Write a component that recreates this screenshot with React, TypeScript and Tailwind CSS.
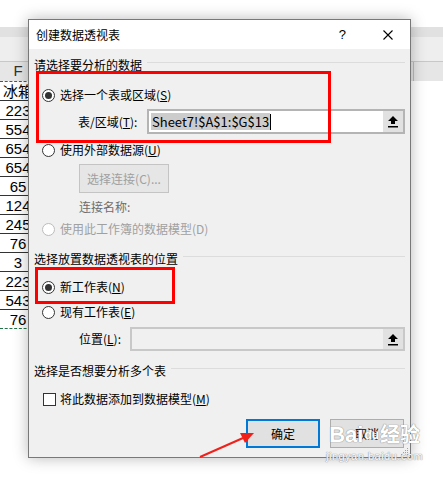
import * as React from "react";

const cells = ["冰箱", "223", "554", "654", "654", "65", "124", "245", "76", "3", "223", "543", "76"];

const Radio = ({ checked = false, disabled = false }: { checked?: boolean; disabled?: boolean }) => (
  <span
    className={`flex h-[13px] w-[13px] shrink-0 items-center justify-center rounded-full border bg-white ${
      disabled ? "border-[#bcbcbc]" : "border-[#333]"
    }`}
  >
    {checked && <span className="h-[7px] w-[7px] rounded-full bg-[#333]" />}
  </span>
);

const UpArrow = () => (
  <svg width="12" height="13" viewBox="0 0 12 13">
    <polygon points="6,1 11,6 8,6 8,9 4,9 4,6 1,6" fill="#000" />
    <rect x="1" y="11" width="10" height="1.5" fill="#000" />
  </svg>
);

const GroupLabel = ({ text }: { text: string }) => (
  <div className="flex h-[18px] items-center gap-[5px]">
    <span>{text}</span>
    <span className="mb-[5px] h-px flex-1 bg-[#dcdcdc]" />
  </div>
);

const App = () => {
  return (
    <div className="relative h-[479px] w-[443px] overflow-hidden bg-white font-['Noto_Sans_CJK_SC',sans-serif]">
      {/* spreadsheet behind the dialog */}
      <div className="h-[27px]" />
      <div className="h-[10px] bg-[#e1e1e1]" />
      <div className="h-[25px] border-b border-[#c8c8c8] bg-[#eeeeee]" />
      <div className="flex h-[19px] bg-[#e6e6e6]">
        <div className="flex w-[36px] items-center justify-center text-[15px] text-[#333] font-['Liberation_Sans',sans-serif]">
          F
        </div>
        <div className="ml-auto w-[30px] border-l border-[#bdbdbd]" />
      </div>
      <div className="w-[36px] border-t border-dashed border-[#217346]">
        {cells.map((c, i) => (
          <div
            key={i}
            className={`flex h-[19px] items-center justify-center text-[15px] leading-none text-black font-['Liberation_Sans','Noto_Sans_CJK_SC',sans-serif] ${
              i === cells.length - 1 ? "border-b border-dashed border-[#217346]" : "border-b border-[#333]"
            }`}
          >
            {c}
          </div>
        ))}
      </div>

      {/* dialog */}
      <div className="absolute left-[28px] top-[19px] flex h-[439px] w-[383px] flex-col border border-[#787878] bg-[#f0f0f0] text-[12px] text-black shadow-[0_0_14px_rgba(0,0,0,0.28)]">
        <div className="flex h-[29px] items-center bg-white pl-[7px] pr-[17px]">
          <span>创建数据透视表</span>
          <span className="ml-auto text-[13px] font-['Liberation_Sans',sans-serif]">?</span>
          <svg className="ml-[37px]" width="10" height="10" viewBox="0 0 10 10">
            <path d="M0.5 0.5 L9.5 9.5 M9.5 0.5 L0.5 9.5" stroke="#000" strokeWidth="1.1" />
          </svg>
        </div>

        <div className="flex flex-1 flex-col px-[5px] pt-[7px]">
          <GroupLabel text="请选择要分析的数据" />

          <div className="mt-[12px] flex h-[18px] items-center gap-[5px] pl-[8px]">
            <Radio checked />
            <span>
              选择一个表或区域(<span className="underline">S</span>)
            </span>
          </div>

          <div className="mt-[5px] flex h-[25px] items-center pl-[44px]">
            <span className="w-[69px]">
              表/区域(<span className="underline">T</span>):
            </span>
            <div className="flex h-[25px] flex-1 items-stretch border-2 border-[#b4b4b4] bg-white">
              <div className="flex flex-1 items-center pl-[2px]">
                <span className="bg-[#cccccc] px-px text-[13px] leading-[17px]">Sheet7!$A$1:$G$13</span>
                <span className="h-[16px] w-px bg-black" />
              </div>
              <div className="flex w-[20px] items-center justify-center bg-[#e1e1e1]">
                <UpArrow />
              </div>
            </div>
          </div>

          <div className="mt-[7px] flex h-[18px] items-center gap-[5px] pl-[8px]">
            <Radio />
            <span>
              使用外部数据源(<span className="underline">U</span>)
            </span>
          </div>

          <div className="mt-[5px] pl-[45px]">
            <div className="flex h-[29px] w-[90px] items-center justify-center border border-[#c4c4c4] bg-[#e6e6e6] text-[#a0a0a0]">
              选择连接(C)...
            </div>
          </div>

          <div className="mt-[5px] flex h-[18px] items-center pl-[45px] text-[#6d6d6d]">连接名称:</div>

          <div className="mt-[4px] flex h-[18px] items-center gap-[5px] pl-[8px] text-[#a0a0a0]">
            <Radio disabled />
            <span>使用此工作簿的数据模型(D)</span>
          </div>

          <div className="mt-[12px]">
            <GroupLabel text="选择放置数据透视表的位置" />
          </div>

          <div className="mt-[10px] flex h-[18px] items-center gap-[5px] pl-[8px]">
            <Radio checked />
            <span>
              新工作表(<span className="underline">N</span>)
            </span>
          </div>

          <div className="mt-[7px] flex h-[18px] items-center gap-[5px] pl-[8px]">
            <Radio />
            <span>
              现有工作表(<span className="underline">E</span>)
            </span>
          </div>

          <div className="mt-[6px] flex h-[24px] items-center pl-[45px]">
            <span className="w-[51px]">
              位置(<span className="underline">L</span>):
            </span>
            <div className="flex h-[24px] flex-1 items-stretch border-2 border-[#c8c8c8] bg-[#f0f0f0]">
              <div className="flex-1" />
              <div className="flex w-[20px] items-center justify-center bg-[#e1e1e1]">
                <UpArrow />
              </div>
            </div>
          </div>

          <div className="mt-[11px]">
            <GroupLabel text="选择是否想要分析多个表" />
          </div>

          <div className="mt-[10px] flex h-[18px] items-center gap-[4px] pl-[9px]">
            <span className="h-[13px] w-[13px] border border-[#333] bg-white" />
            <span>
              将此数据添加到数据模型(<span className="underline">M</span>)
            </span>
          </div>

          <div className="mt-[11px] flex justify-end gap-[10px] pr-px">
            <div className="flex h-[29px] w-[74px] items-center justify-center border-2 border-[#0078d7] bg-[#e1e1e1]">
              确定
            </div>
            <div className="flex h-[29px] w-[74px] items-center justify-center border border-[#adadad] bg-[#e1e1e1]">
              取消
            </div>
          </div>
        </div>

        {/* resize grip */}
        <svg className="absolute bottom-[1px] right-[1px]" width="10" height="10" viewBox="0 0 10 10">
          <g fill="#a0a0a0">
            <rect x="8" y="2" width="1" height="1" />
            <rect x="6" y="4" width="1" height="1" />
            <rect x="8" y="4" width="1" height="1" />
            <rect x="4" y="6" width="1" height="1" />
            <rect x="6" y="6" width="1" height="1" />
            <rect x="8" y="6" width="1" height="1" />
            <rect x="2" y="8" width="1" height="1" />
            <rect x="4" y="8" width="1" height="1" />
            <rect x="6" y="8" width="1" height="1" />
            <rect x="8" y="8" width="1" height="1" />
          </g>
        </svg>
      </div>

      {/* Baidu jingyan watermark */}
      <div className="pointer-events-none absolute left-[326px] top-[424px] flex flex-col items-center text-white [text-shadow:0_0_1px_#8a8a8a,0_0_1px_#8a8a8a]">
        <div className="flex items-center text-[22px] font-bold leading-none font-['Liberation_Sans','Noto_Sans_CJK_SC',sans-serif]">
          <span>Bai</span>
          <span className="mx-[1px] text-[12px]">du</span>
          <span className="text-[20px]">经验</span>
        </div>
        <div className="mt-[5px] text-[11px] leading-none tracking-[0.5px] font-['Liberation_Sans',sans-serif]">
          jingyan.baidu.com
        </div>
      </div>

      {/* red annotations */}
      <div className="pointer-events-none absolute left-[36px] top-[71px] h-[72px] w-[295px] border-[3px] border-[#ff0000]" />
      <div className="pointer-events-none absolute left-[35px] top-[267px] h-[37px] w-[140px] border-[3px] border-[#ff0000]" />
      <svg className="pointer-events-none absolute left-0 top-0" width="443" height="479" viewBox="0 0 443 479">
        <line x1="200" y1="457" x2="243" y2="438" stroke="#f0201a" strokeWidth="2" />
        <polygon points="254,433 240,433 245,443" fill="#f0201a" />
      </svg>
    </div>
  );
};

export default App;
